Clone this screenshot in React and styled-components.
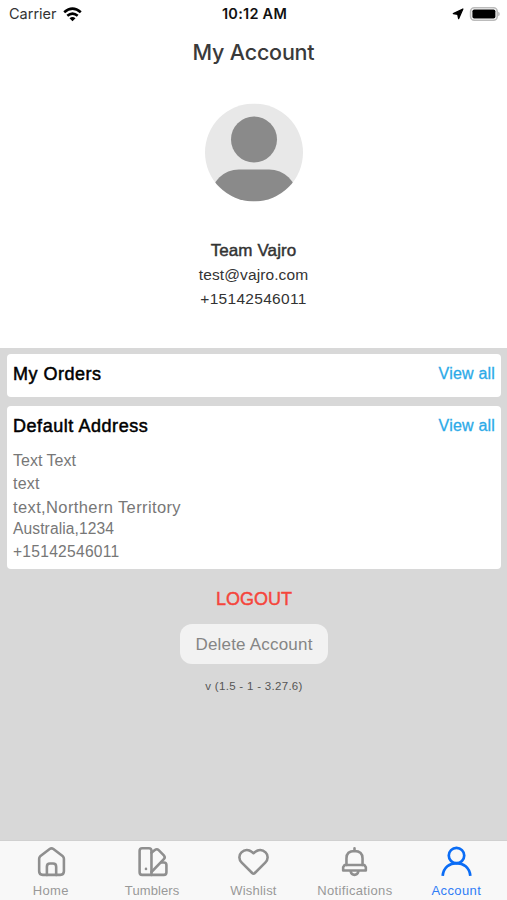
import React from "react";
import styled, { createGlobalStyle } from "styled-components";

const GlobalStyle = createGlobalStyle`
  * { box-sizing: border-box; }
  body { margin: 0; background: #fff; }
`;

const Screen = styled.div`
  width: 507px;
  height: 900px;
  display: flex;
  flex-direction: column;
  overflow: hidden;
  background: #fff;
  font-family: "Liberation Sans", Arial, sans-serif;
`;

const Text = styled.span`
  display: block;
  white-space: nowrap;
  color: ${(p) => p.$color || "#333"};
  font-size: ${(p) => p.$size}px;
  line-height: ${(p) => p.$line || 24}px;
  letter-spacing: ${(p) => p.$spacing || 0}px;
  -webkit-text-stroke: ${(p) => p.$stroke || 0}px currentColor;
`;

const StatusBar = styled.header`
  height: 28px;
  flex: none;
  display: grid;
  grid-template-columns: 1fr auto 1fr;
  align-items: center;
  padding: 0 7px 0 9px;
  font-family: Inter, sans-serif;
  font-size: 14.5px;
  line-height: 28px;
  color: #111;
`;

const Carrier = styled.div`
  display: flex;
  align-items: center;
  gap: 6px;
  color: #333;
`;

const Clock = styled.div`
  font-weight: 600;
  font-size: 14.5px;
  letter-spacing: 0.25px;
`;

const StatusIcons = styled.div`
  display: flex;
  align-items: center;
  justify-content: flex-end;
  gap: 5px;
`;

const Profile = styled.section`
  height: 320px;
  flex: none;
  display: flex;
  flex-direction: column;
  align-items: center;
  padding-top: 10px;
`;

const Title = styled.h1`
  margin: 0;
  font-family: Inter, sans-serif;
  font-size: 21.5px;
  font-weight: 500;
  line-height: 28px;
  letter-spacing: -0.2px;
  color: #3a3a3a;
`;

const Avatar = styled.svg`
  display: block;
  margin: 37px 0 38px;
  transform: translateY(0.4px);
`;

const Content = styled.main`
  flex: 1;
  display: flex;
  flex-direction: column;
  align-items: center;
  background: #d8d8d8;
  padding: 6px 6px 0 7px;
`;

const Card = styled.section`
  align-self: stretch;
  height: ${(p) => p.$height}px;
  margin-bottom: 9px;
  padding: 8px 6px 0;
  border-radius: 4px;
  background: #fff;
`;

const CardHead = styled.div`
  display: flex;
  justify-content: space-between;
  align-items: center;
  height: 23px;
`;

const Address = styled.div`
  padding-top: 13px;
`;

const DeleteButton = styled.button`
  width: 148px;
  height: 40px;
  margin: 4px 0 10px;
  padding: 1px 0 0;
  display: flex;
  justify-content: center;
  align-items: center;
  border: 0;
  border-radius: 12px;
  background: #f2f2f2;
  font-family: inherit;
`;

const TabBar = styled.nav`
  height: 60px;
  flex: none;
  display: grid;
  grid-template-columns: repeat(5, 1fr);
  border-top: 1px solid #d0d0d0;
  background: #f8f8f8;
`;

const Tab = styled.div`
  display: flex;
  flex-direction: column;
  align-items: center;
  padding-top: 5px;
  color: ${(p) => (p.$active ? "#0a6cf5" : "#8f8f8f")};
`;

const TabIcon = styled.svg`
  display: block;
  flex: none;
  fill: none;
  stroke: currentColor;
  stroke-width: 2.5;
  stroke-linecap: round;
  stroke-linejoin: round;
`;

const addressLines = [
  { text: "Text Text", size: 16, spacing: 0 },
  { text: "text", size: 16, spacing: 0.2 },
  { text: "text,Northern Territory", size: 16.5, spacing: 0.38 },
  { text: "Australia,1234", size: 15.6, spacing: 0.1 },
  { text: "+15142546011", size: 15.6, spacing: 0.26 },
];

const tabs = [
  {
    label: "Home",
    spacing: 0.35,
    icon: (
      <>
        <path d="M5 12.400Q5 11 6 10L15.200 2.900Q17 1.600 18.800 2.900L28 10Q29 11 29 12.400V24.500Q29 28 25.500 28H8.500Q5 28 5 24.500Z" />
        <path d="M12.500 28V20Q12.500 17 15.500 17H18.500Q21.500 17 21.500 20V28" />
      </>
    ),
  },
  {
    label: "Tumblers",
    spacing: 0.1,
    icon: (
      <>
        <path d="M6 2.200H12.500Q15 2.200 15 4.700V28H6Q3.500 28 3.500 25.500V4.700Q3.500 2.200 6 2.200Z" />
        <path d="M15 6.600L18.300 3.900Q20.300 2.300 22 4L27 9.100Q28.700 10.900 27 12.700L15 25.200" />
        <path d="M24.500 16H27Q29.500 16 29.500 18.500V25.500Q29.500 28 27 28H15" />
        <path d="M9.700 22.200V22.300" />
      </>
    ),
  },
  {
    label: "Wishlist",
    spacing: 0.2,
    icon: (
      <path d="M14.700 26.200L4.600 16.200C1.700 13.300 1.500 8.800 4.300 6.200C7.400 3.300 11.500 3.400 14.200 5.600L16 7L17.800 5.600C20.500 3.400 24.600 3.300 27.700 6.200C30.500 8.800 30.300 13.300 27.400 16.200L17.300 26.200Q16 27.400 14.700 26.200Z" />
    ),
  },
  {
    label: "Notifications",
    spacing: 0.34,
    icon: (
      <>
        <path d="M16 2.200V5M8.200 18.500V12Q8.200 4.800 16 4.800Q23.800 4.800 23.800 12V18.500" />
        <path d="M6.400 18.500H25.600L27 20.500V23.700H5V20.500Z" />
        <path d="M12.300 24.800Q13 28 16 28Q19 28 19.700 24.800" />
      </>
    ),
  },
  {
    label: "Account",
    spacing: 0.4,
    active: true,
    icon: (
      <>
        <circle cx="16" cy="9.300" r="7.500" strokeWidth="2.600" />
        <path d="M2.600 29C3.800 12.400 28.200 12.400 29.400 29" strokeWidth="2.600" strokeLinecap="butt" />
      </>
    ),
  },
];

function ViewAll() {
  return (
    <Text $size={16} $color="#2caae8" $spacing={0.2} $stroke={0.3}>
      View all
    </Text>
  );
}

export default function App() {
  return (
    <Screen>
      <GlobalStyle />
      <StatusBar>
        <Carrier>
          Carrier
          <svg width="19" height="15" viewBox="0 0 19 15" fill="none" stroke="#000" strokeWidth="2.600">
            <path d="M1.200 5.300Q9.500 -2 17.800 5.300" />
            <path d="M4.300 8.800Q9.500 4.300 14.700 8.800" />
            <path d="M9.500 14.200L6.500 11.300Q9.500 8.700 12.500 11.300Z" fill="#000" stroke="none" />
          </svg>
        </Carrier>
        <Clock>10:12 AM</Clock>
        <StatusIcons>
          <svg width="12" height="12" viewBox="0 0 12 12">
            <path d="M1.300 5.600L10.900 1L6.600 10.700L5.700 6.300Z" fill="#000" stroke="#000" strokeWidth="1.200" strokeLinejoin="round" />
          </svg>
          <svg width="31" height="14" viewBox="0 0 31 14">
            <rect x="1.600" y="0.800" width="26.600" height="12.400" rx="3.700" fill="#fff" stroke="#bbb" strokeWidth="1.600" />
            <rect x="3.400" y="2.500" width="23" height="9" rx="1.800" fill="#000" />
            <path d="M29.100 4.700Q30.800 5.300 30.800 7Q30.800 8.700 29.100 9.300Z" fill="#bbb" />
          </svg>
        </StatusIcons>
      </StatusBar>

      <Profile>
        <Title>My Account</Title>
        <Avatar width="98" height="98" viewBox="0 0 98 98">
          <defs>
            <clipPath id="avatar-disc">
              <circle cx="49" cy="49" r="49" />
            </clipPath>
          </defs>
          <circle cx="49" cy="49" r="49" fill="#e8e8e8" />
          <g clipPath="url(#avatar-disc)" fill="#8a8a8a">
            <circle cx="49" cy="36" r="23" />
            <rect x="6" y="66" width="86" height="60" rx="28" />
          </g>
        </Avatar>
        <Text $size={17} $spacing={0.1} $stroke={0.45}>
          Team Vajro
        </Text>
        <Text $size={15.5} $spacing={0.1}>
          test@vajro.com
        </Text>
        <Text $size={15.5} $spacing={0.3}>
          +15142546011
        </Text>
      </Profile>

      <Content>
        <Card $height={43}>
          <CardHead>
            <Text $size={18} $color="#000" $spacing={0.5} $stroke={0.5}>
              My Orders
            </Text>
            <ViewAll />
          </CardHead>
        </Card>
        <Card $height={163}>
          <CardHead>
            <Text $size={18} $color="#000" $spacing={0.55} $stroke={0.5}>
              Default Address
            </Text>
            <ViewAll />
          </CardHead>
          <Address>
            {addressLines.map((l) => (
              <Text key={l.text} $size={l.size} $line={22.8} $spacing={l.spacing} $color="#777">
                {l.text}
              </Text>
            ))}
          </Address>
        </Card>
        <Text $size={18} $color="#f5453b" $line={42} $stroke={0.45}>
          LOGOUT
        </Text>
        <DeleteButton>
          <Text $size={17} $color="#858585" $spacing={0.2}>
            Delete Account
          </Text>
        </DeleteButton>
        <Text $size={11.5} $color="#555" $spacing={0.3}>
          v (1.5 - 1 - 3.27.6)
        </Text>
      </Content>

      <TabBar>
        {tabs.map((t) => (
          <Tab key={t.label} $active={t.active}>
            <TabIcon width="33" height="33" viewBox="0 0 32 32">
              {t.icon}
            </TabIcon>
            <Text $size={13} $line={24} $spacing={t.spacing} $color={t.active ? "#2f7df6" : "#999"}>
              {t.label}
            </Text>
          </Tab>
        ))}
      </TabBar>
    </Screen>
  );
}
